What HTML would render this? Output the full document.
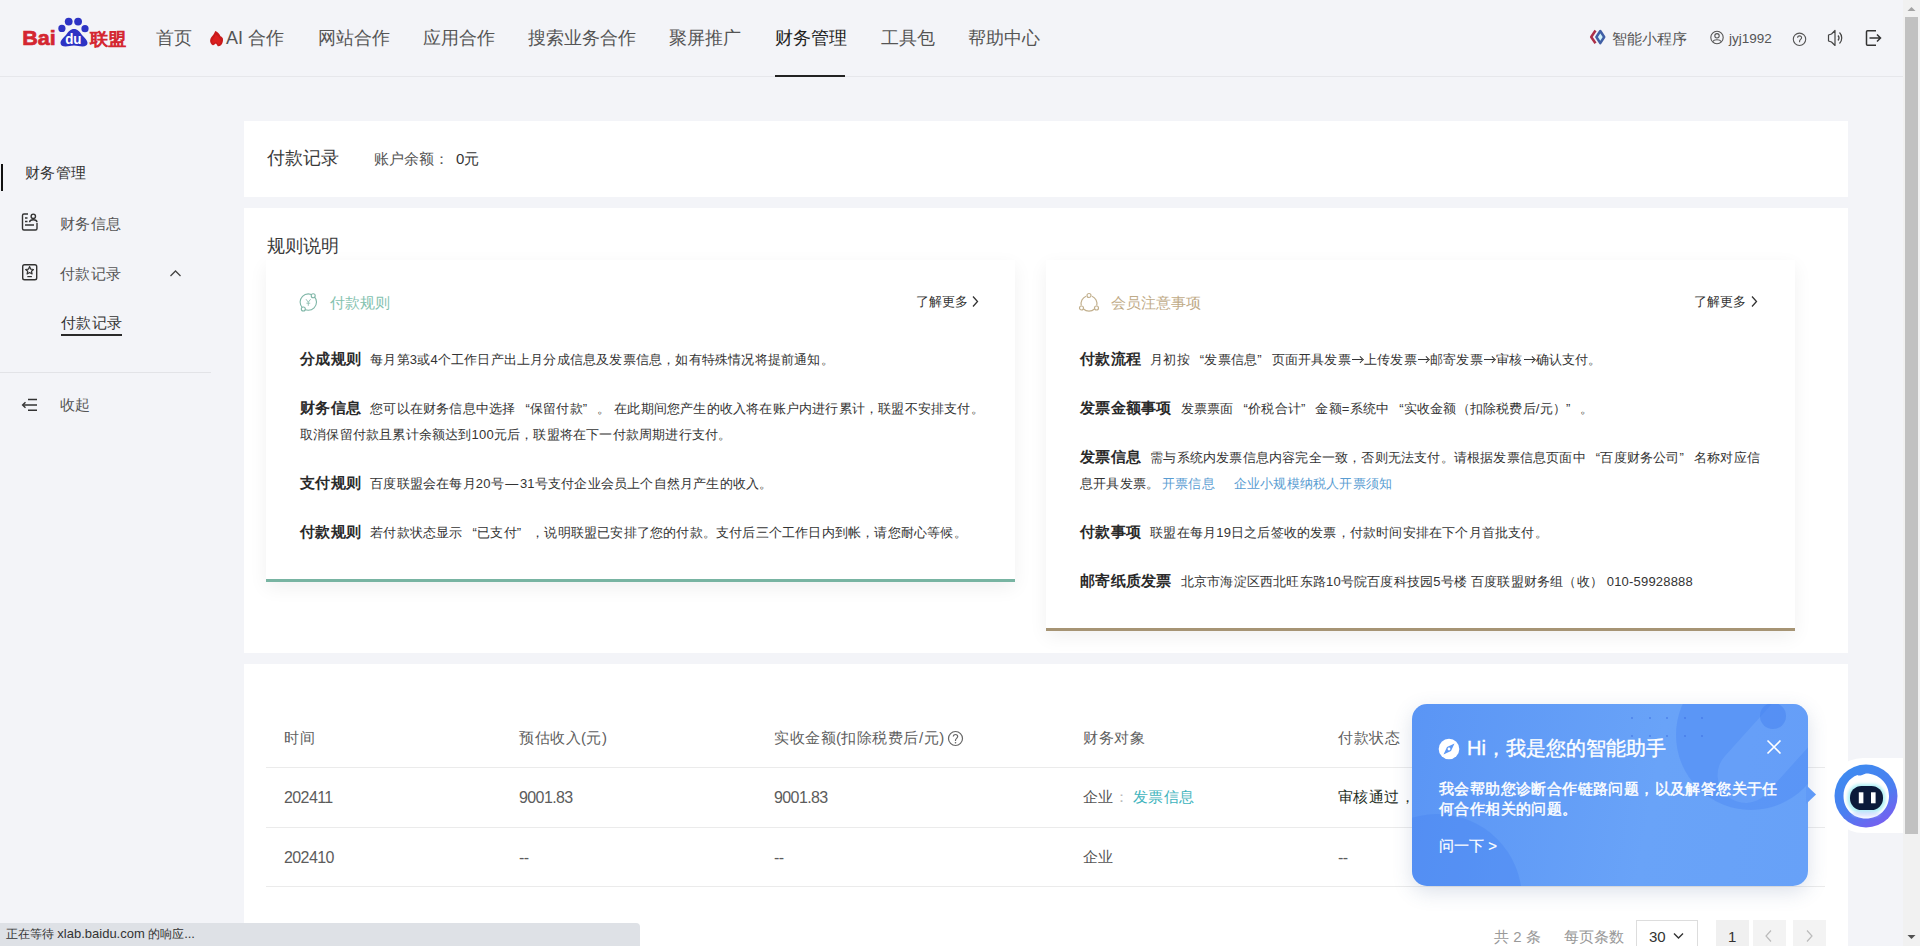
<!DOCTYPE html>
<html><head><meta charset="utf-8">
<style>
*{box-sizing:border-box;margin:0;padding:0}
html,body{width:1920px;height:946px;overflow:hidden}
body{background:#f3f4f8;font-family:"Liberation Sans",sans-serif;color:#555;position:relative}
.a{position:absolute;white-space:nowrap}
.nav{font-size:18px;line-height:24px;top:26px;color:#555}
.side{font-size:15px;letter-spacing:0.4px;line-height:20px;color:#555}
.card{position:absolute;background:#fff}
.sub{position:absolute;background:#fff;box-shadow:0 6px 18px rgba(0,0,0,0.06)}
.p{position:absolute;white-space:nowrap;font-size:13px;letter-spacing:0.2px;line-height:26px;color:#333}
.p b{font-size:15px;letter-spacing:0.3px;color:#2a2a2a;margin-right:9px;font-weight:bold}
.ql{display:inline-block;width:14.5px;text-align:right}
.qr{display:inline-block;width:14.5px;text-align:left}
.ar{display:inline-block;width:13.2px;height:8px;vertical-align:0.5px;position:relative}
.ar:before{content:"";position:absolute;left:1.5px;top:3.5px;width:10px;height:1px;background:#333}
.ar:after{content:"";position:absolute;left:7.5px;top:1.5px;width:3.5px;height:3.5px;border-top:1px solid #333;border-right:1px solid #333;transform:rotate(45deg)}
.th{font-size:15px;letter-spacing:0.5px;line-height:20px;color:#606060}
.td{font-size:16px;letter-spacing:-0.6px;line-height:20px;color:#5c5c5c}
.tc{font-size:15px;letter-spacing:0.4px;line-height:20px;color:#555}
.line{position:absolute;height:1px;background:#ebebeb}
</style></head><body>

<!-- header -->
<div class="a" style="left:0;top:76px;width:1903px;height:1px;background:#e6e7eb"></div>
<svg class="a" style="left:0;top:0" width="140" height="76" viewBox="0 0 140 76">
  <text x="22.3" y="45.3" font-family="Liberation Sans" font-weight="bold" font-size="21" fill="#d42630" stroke="#d42630" stroke-width="0.7" textLength="33.5" lengthAdjust="spacingAndGlyphs">Bai</text>
  <circle cx="68.7" cy="21.6" r="3.9" fill="#2d33c4"/>
  <circle cx="78.1" cy="21.6" r="3.9" fill="#2d33c4"/>
  <circle cx="61.9" cy="28.4" r="3.6" fill="#2d33c4"/>
  <circle cx="85" cy="28.7" r="3.6" fill="#2d33c4"/>
  <path d="M74 29 C70.5 29 68.5 31.5 66 35 C63.5 38 60.5 40 60.5 43 C60.5 45.5 62.5 46.4 65.5 46.4 C68.5 46.4 71 45.6 74 45.6 C77 45.6 79.5 46.4 82.5 46.4 C85.5 46.4 87.5 45.3 87.5 43 C87.5 40 84.5 38 82 35 C79.5 31.5 77.5 29 74 29Z" fill="#2d33c4"/>
  <text x="65.2" y="43.6" font-family="Liberation Sans" font-weight="bold" font-size="14" fill="#fff" textLength="16.3" lengthAdjust="spacingAndGlyphs">du</text>
  <text x="89.8" y="44.6" font-size="17" fill="#d42630" stroke="#d42630" stroke-width="0.9" textLength="36.5" lengthAdjust="spacingAndGlyphs">联盟</text>
</svg>
<div class="a nav" style="left:156px">首页</div>
<svg class="a" style="left:204px;top:26px" width="24" height="24" viewBox="0 0 24 24"><path d="M11.2 5 C13.5 5.5 15.5 8 16.5 10.2 C17.5 10.5 18.6 11.5 18.9 12.5 C19.3 14.5 18.8 17.5 17 19.2 C16 20.1 14.8 20.5 13.8 20.3 C13.2 19.5 12.6 18.2 11.8 17.6 C11 18.3 9.8 19.4 8.8 19.2 C7.2 18.5 6 16.5 6.1 14.5 C6.3 12 8 10.5 9.3 8.8 C10.2 7.6 10.6 6.2 11.2 5Z" fill="#c81a1c"/><path d="M11.5 8.5 C13.5 9.5 15.5 11.5 16.5 14 C17 16 16 18 14.5 19 C14 17.5 13 16.5 12 16 C10.5 16.5 9.5 17.5 9 18 C8 16.5 8 14.5 9 13 C10 11.5 11 10.5 11.5 8.5Z" fill="#e42222" opacity="0.7"/></svg>
<div class="a nav" style="left:226px">AI 合作</div>
<div class="a nav" style="left:318px">网站合作</div>
<div class="a nav" style="left:423px">应用合作</div>
<div class="a nav" style="left:528px">搜索业务合作</div>
<div class="a nav" style="left:669px">聚屏推广</div>
<div class="a nav" style="left:775px;color:#222">财务管理</div>
<div class="a" style="left:775px;top:75px;width:70px;height:2px;background:#222"></div>
<div class="a nav" style="left:881px">工具包</div>
<div class="a nav" style="left:968px">帮助中心</div>

<!-- header right -->
<svg class="a" style="left:1589px;top:29px" width="18" height="16" viewBox="0 0 18 16">
  <path d="M6.5 1.5 L2.2 8 L6.5 14.3" fill="none" stroke="#ad3049" stroke-width="2.5" stroke-linejoin="round"/>
  <path d="M11.3 2 L15.2 8 L11.3 14.2 L7.4 8Z" fill="#cff2fb" stroke="#405fa5" stroke-width="2.5" stroke-linejoin="round"/>
</svg>
<div class="a" style="left:1612px;top:29px;font-size:15px;line-height:20px;color:#555">智能小程序</div>
<svg class="a" style="left:1710px;top:30px" width="15" height="15" viewBox="0 0 15 15">
  <circle cx="7" cy="7.5" r="6.2" fill="none" stroke="#555" stroke-width="1.1"/>
  <circle cx="7" cy="5.8" r="2.2" fill="none" stroke="#555" stroke-width="1.1"/>
  <path d="M3 11.5 C4 9.2 10 9.2 11 11.5" fill="none" stroke="#555" stroke-width="1.1"/>
</svg>
<div class="a" style="left:1729px;top:29px;font-size:13.5px;line-height:20px;color:#555">jyj1992</div>
<svg class="a" style="left:1792px;top:32px" width="15" height="15" viewBox="0 0 15 15">
  <circle cx="7.5" cy="7.3" r="6.2" fill="none" stroke="#555" stroke-width="1.1"/>
  <path d="M5.6 5.8 C5.6 3.2 9.6 3.2 9.6 5.8 C9.6 7.3 7.6 7.4 7.6 9 L7.6 10.3" fill="none" stroke="#555" stroke-width="1.1"/>
</svg>
<svg class="a" style="left:1827px;top:29px" width="18" height="18" viewBox="0 0 18 18">
  <path d="M1.5 6 L4.5 5 L8 1.5 L8 16.5 L4.5 13 L1.5 12Z" fill="none" stroke="#444" stroke-width="1.2" stroke-linejoin="round"/>
  <path d="M11 6.5 C12.3 8 12.3 10 11 11.5" fill="none" stroke="#444" stroke-width="1.2"/>
  <path d="M12.5 3.5 C15.5 6.5 15.5 11.5 12.5 14.5" fill="none" stroke="#444" stroke-width="1.2"/>
</svg>
<svg class="a" style="left:1865px;top:29px" width="18" height="18" viewBox="0 0 18 18">
  <path d="M11 1.8 L2.5 1.8 Q1.5 1.8 1.5 2.8 L1.5 15.2 Q1.5 16.2 2.5 16.2 L11 16.2" fill="none" stroke="#333" stroke-width="1.5"/>
  <path d="M4.5 9 L15.5 9 M12 5.5 L15.5 9 L12 12.5" fill="none" stroke="#333" stroke-width="1.5"/>
</svg>

<!-- sidebar -->
<div class="a" style="left:1px;top:164px;width:2px;height:27px;background:#111"></div>
<div class="a side" style="left:25px;top:163px;color:#333">财务管理</div>
<svg class="a" style="left:20px;top:211px" width="20" height="22" viewBox="0 0 20 22">
  <path d="M8 3 L4 3 Q2.5 3 2.5 4.5 L2.5 17.5 Q2.5 19 4 19 L15.5 19 Q17 19 17 17.5 L17 12" fill="none" stroke="#333" stroke-width="1.4"/>
  <circle cx="13.3" cy="5.3" r="2.2" fill="none" stroke="#333" stroke-width="1.4"/>
  <path d="M9.5 11.2 C9.8 8 16.8 8 17 11.2" fill="none" stroke="#333" stroke-width="1.4"/>
  <path d="M5 7 L7.5 7 M5 10.5 L7.5 10.5 M5 14 L14 14" stroke="#333" stroke-width="1.4"/>
</svg>
<div class="a side" style="left:60px;top:214px">财务信息</div>
<svg class="a" style="left:20px;top:262px" width="20" height="20" viewBox="0 0 20 20">
  <rect x="2.7" y="2.7" width="14" height="15" rx="1.8" fill="none" stroke="#333" stroke-width="1.4"/>
  <path d="M9.6 4.6 L10.8 7.2 L13.5 7.5 L11.5 9.3 L12.1 12 L9.6 10.6 L7.1 12 L7.7 9.3 L5.7 7.5 L8.4 7.2Z" fill="none" stroke="#333" stroke-width="1.2" stroke-linejoin="round"/>
  <path d="M7.3 14.6 L11.9 14.6" stroke="#333" stroke-width="1.2"/>
</svg>
<div class="a side" style="left:60px;top:264px">付款记录</div>
<svg class="a" style="left:169px;top:268.5px" width="13" height="9" viewBox="0 0 13 9"><path d="M1.5 7 L6.5 2 L11.5 7" fill="none" stroke="#444" stroke-width="1.3"/></svg>
<div class="a side" style="left:61px;top:313px;color:#333">付款记录</div>
<div class="a" style="left:61px;top:334px;width:61px;height:2px;background:#2a2a2a"></div>
<div class="a" style="left:0;top:372px;width:211px;height:1px;background:#e2e3e7"></div>
<svg class="a" style="left:20px;top:395px" width="20" height="20" viewBox="0 0 20 20">
  <path d="M8 4.5 L17 4.5 M3.5 10 L17 10 M8 15.3 L17 15.3" fill="none" stroke="#333" stroke-width="1.4"/>
  <path d="M5.5 7.2 L2.6 10 L5.5 12.8" fill="none" stroke="#333" stroke-width="1.4"/>
</svg>
<div class="a side" style="left:60px;top:395px">收起</div>

<!-- card 1 -->
<div class="card" style="left:244px;top:121px;width:1604px;height:76px"></div>
<div class="a" style="left:267px;top:146px;font-size:18px;line-height:24px;color:#3a3a3a">付款记录</div>
<div class="a" style="left:374px;top:149px;font-size:15px;line-height:20px;color:#555">账户余额：</div>
<div class="a" style="left:456px;top:149px;font-size:15px;line-height:20px;color:#333">0元</div>

<!-- card 2 -->
<div class="card" style="left:244px;top:208px;width:1604px;height:445px"></div>
<div class="a" style="left:267px;top:234px;font-size:18px;line-height:24px;color:#3a3a3a">规则说明</div>


<!-- left sub card -->
<div class="sub" style="left:266px;top:260px;width:749px;height:322px;border-bottom:3px solid #78b4a2"></div>
<svg class="a" style="left:298px;top:292px" width="20" height="20" viewBox="0 0 20 20">
  <circle cx="10.3" cy="10.1" r="8.2" fill="none" stroke="#7fb6a7" stroke-width="1.1"/>
  <circle cx="15.2" cy="3.8" r="2" fill="#fff" stroke="#7fb6a7" stroke-width="1.1"/>
  <circle cx="5.3" cy="17" r="2" fill="#fff" stroke="#7fb6a7" stroke-width="1.1"/>
  <path d="M8 7.2 L10.3 10.2 L12.6 7.2 M10.3 10.2 L10.3 13.8 M8.4 11.2 L12.2 11.2" fill="none" stroke="#8dbdb0" stroke-width="0.9"/>
</svg>
<div class="a" style="left:330px;top:293px;font-size:15px;line-height:20px;color:#84c2af">付款规则</div>
<div class="a" style="left:916px;top:293px;font-size:13px;line-height:18px;color:#333">了解更多</div>
<svg class="a" style="left:971px;top:295px" width="9" height="13" viewBox="0 0 9 13"><path d="M2 1.5 L6.5 6.5 L2 11.5" fill="none" stroke="#333" stroke-width="1.3"/></svg>

<div class="p" style="left:300px;top:346px"><b>分成规则</b>每月第3或4个工作日产出上月分成信息及发票信息，如有特殊情况将提前通知。</div>
<div class="p" style="left:300px;top:395px"><b>财务信息</b>您可以在财务信息中选择<span class="ql">“</span>保留付款<span class="qr">”</span>。 在此期间您产生的收入将在账户内进行累计，联盟不安排支付。<br>取消保留付款且累计余额达到100元后，联盟将在下一付款周期进行支付。</div>
<div class="p" style="left:300px;top:470px"><b>支付规则</b>百度联盟会在每月20号<span style="display:inline-block;width:16px;text-align:center">—</span>31号支付企业会员上个自然月产生的收入。</div>
<div class="p" style="left:300px;top:519px"><b>付款规则</b>若付款状态显示<span class="ql">“</span>已支付<span class="qr">”</span>，说明联盟已安排了您的付款。支付后三个工作日内到帐，请您耐心等候。</div>

<!-- right sub card -->
<div class="sub" style="left:1046px;top:260px;width:749px;height:371px;border-bottom:3px solid #a69474"></div>
<svg class="a" style="left:1078px;top:292px" width="22" height="20" viewBox="0 0 22 20">
  <path d="M8 4.2 A8 8 0 0 0 3.3 13.5 M14 4.2 A8 8 0 0 1 18.7 13.5 M5.5 17 A8 8 0 0 0 16.5 17" fill="none" stroke="#c2b08e" stroke-width="1.2"/>
  <circle cx="11" cy="3.5" r="2" fill="#fff" stroke="#c2b08e" stroke-width="1.2"/>
  <circle cx="3.5" cy="16" r="2" fill="#fff" stroke="#c2b08e" stroke-width="1.2"/>
  <circle cx="18.5" cy="16" r="2" fill="#fff" stroke="#c2b08e" stroke-width="1.2"/>
</svg>
<div class="a" style="left:1111px;top:293px;font-size:15px;line-height:20px;color:#bfab88">会员注意事项</div>
<div class="a" style="left:1694px;top:293px;font-size:13px;line-height:18px;color:#333">了解更多</div>
<svg class="a" style="left:1750px;top:295px" width="9" height="13" viewBox="0 0 9 13"><path d="M2 1.5 L6.5 6.5 L2 11.5" fill="none" stroke="#333" stroke-width="1.3"/></svg>

<div class="p" style="left:1080px;top:346px"><b>付款流程</b>月初按<span class="ql">“</span>发票信息<span class="qr">”</span>页面开具发票<span class="ar"></span>上传发票<span class="ar"></span>邮寄发票<span class="ar"></span>审核<span class="ar"></span>确认支付。</div>
<div class="p" style="left:1080px;top:395px"><b>发票金额事项</b>发票票面<span class="ql">“</span>价税合计<span class="qr">”</span>金额=系统中<span class="ql">“</span>实收金额（扣除税费后/元）<span class="qr">”</span>。</div>
<div class="p" style="left:1080px;top:444px"><b>发票信息</b>需与系统内发票信息内容完全一致，否则无法支付。请根据发票信息页面中<span class="ql">“</span>百度财务公司<span class="qr">”</span>名称对应信<br>息开具发票。 <span style="color:#5a9dd2;margin-left:-1px">开票信息</span><span style="color:#5a9dd2;margin-left:19px">企业小规模纳税人开票须知</span></div>
<div class="p" style="left:1080px;top:519px"><b>付款事项</b>联盟在每月19日之后签收的发票，付款时间安排在下个月首批支付。</div>
<div class="p" style="left:1080px;top:568px"><b>邮寄纸质发票</b>北京市海淀区西北旺东路10号院百度科技园5号楼 百度联盟财务组（收） 010-59928888</div>

<!-- card 3 table -->
<div class="card" style="left:244px;top:664px;width:1604px;height:282px"></div>
<div class="a th" style="left:284px;top:728px">时间</div>
<div class="a th" style="left:519px;top:728px">预估收入(元)</div>
<div class="a th" style="left:774px;top:728px">实收金额(扣除税费后/元)</div>
<svg class="a" style="left:947px;top:729.5px" width="17" height="17" viewBox="0 0 17 17">
  <circle cx="8.5" cy="8.5" r="7" fill="none" stroke="#666" stroke-width="1.2"/>
  <path d="M6.3 6.6 C6.3 3.8 10.7 3.8 10.7 6.6 C10.7 8.3 8.5 8.4 8.5 10.2 L8.5 11" fill="none" stroke="#666" stroke-width="1.2"/>
  <circle cx="8.5" cy="12.8" r="0.8" fill="#666"/>
</svg>
<div class="a th" style="left:1083px;top:728px">财务对象</div>
<div class="a th" style="left:1338px;top:728px">付款状态</div>
<div class="line" style="left:266px;top:767px;width:1559px"></div>
<div class="a td" style="left:284px;top:787.5px">202411</div>
<div class="a td" style="left:519px;top:787.5px">9001.83</div>
<div class="a td" style="left:774px;top:787.5px">9001.83</div>
<div class="a tc" style="left:1083px;top:787px">企业<span style="color:#bbb">：</span></div>
<div class="a tc" style="left:1133px;top:787px;color:#3fb4bd">发票信息</div>
<div class="a tc" style="left:1338px;top:787px;color:#1e2e1e">审核通过，</div>
<div class="line" style="left:266px;top:827px;width:1559px"></div>
<div class="a td" style="left:284px;top:847.5px">202410</div>
<div class="a td" style="left:519px;top:847.5px">--</div>
<div class="a td" style="left:774px;top:847.5px">--</div>
<div class="a tc" style="left:1083px;top:847px">企业</div>
<div class="a td" style="left:1338px;top:847.5px">--</div>
<div class="line" style="left:266px;top:886px;width:1559px"></div>

<!-- pagination -->
<div class="a" style="left:1494px;top:927px;font-size:15px;line-height:20px;color:#999">共 2 条</div>
<div class="a" style="left:1564px;top:927px;font-size:15px;line-height:20px;color:#999">每页条数</div>
<div class="a" style="left:1636px;top:920px;width:62px;height:40px;border:1px solid #ddd;background:#fff"></div>
<div class="a" style="left:1649px;top:927px;font-size:15px;line-height:20px;color:#333">30</div>
<svg class="a" style="left:1673px;top:932px" width="11" height="8" viewBox="0 0 11 8"><path d="M1 1.5 L5.5 6 L10 1.5" fill="none" stroke="#333" stroke-width="1.4"/></svg>
<div class="a" style="left:1716px;top:920px;width:33px;height:40px;background:#f0f0f0"></div>
<div class="a" style="left:1728px;top:927px;font-size:15px;line-height:20px;color:#333">1</div>
<div class="a" style="left:1753px;top:920px;width:33px;height:40px;background:#f3f3f3"></div>
<svg class="a" style="left:1764px;top:929px" width="9" height="14" viewBox="0 0 9 14"><path d="M7 1.5 L2 7 L7 12.5" fill="none" stroke="#bbb" stroke-width="1.2"/></svg>
<div class="a" style="left:1793px;top:920px;width:33px;height:40px;background:#f3f3f3"></div>
<svg class="a" style="left:1805px;top:929px" width="9" height="14" viewBox="0 0 9 14"><path d="M2 1.5 L7 7 L2 12.5" fill="none" stroke="#bbb" stroke-width="1.2"/></svg>

<!-- status bar -->
<div class="a" style="left:0;top:923px;width:640px;height:23px;background:#dee1e6;border-top-right-radius:4px"></div>
<div class="a" style="left:6px;top:926px;font-size:12px;line-height:16px;color:#333">正在等待 <span style="font-size:13px">xlab.baidu.com</span> 的响应<span style="font-size:13px">...</span></div>

<!-- popup -->
<div class="a" style="left:1412px;top:704px;width:396px;height:182px;border-radius:15px;background:linear-gradient(100deg,#5a95f5 0%,#69a3f8 60%,#67a1f8 100%);box-shadow:0 6px 20px rgba(60,90,140,0.18);overflow:hidden">
  <div style="position:absolute;left:-60px;top:110px;width:170px;height:170px;border-radius:50%;background:rgba(70,130,240,0.35)"></div>
  <div style="position:absolute;left:264px;top:-44px;width:150px;height:150px;border-radius:50%;background:rgba(75,135,243,0.45)"></div>
  <div style="position:absolute;left:290px;top:8px;width:150px;height:56px;border-radius:28px;background:rgba(140,190,255,0.22);transform:rotate(-48deg)"></div>
  <div style="position:absolute;left:348px;top:-1px;width:26px;height:26px;border-radius:50%;background:rgba(70,130,240,0.5)"></div>
  <svg style="position:absolute;left:215px;top:8px" width="100" height="40" viewBox="0 0 100 40"><g fill="rgba(60,110,225,0.55)">
   <circle cx="5" cy="6" r="1.1"/><circle cx="23" cy="6" r="1.1"/><circle cx="40" cy="6" r="1.1"/><circle cx="58" cy="6" r="1.1"/><circle cx="75" cy="6" r="1.1"/>
   <circle cx="5" cy="24" r="1.1"/><circle cx="23" cy="24" r="1.1"/><circle cx="40" cy="24" r="1.1"/><circle cx="58" cy="24" r="1.1"/><circle cx="75" cy="24" r="1.1"/>
  </g></svg>
</div>
<svg class="a" style="left:1806px;top:785px" width="11" height="19" viewBox="0 0 11 19"><path d="M0 0 L10 9.5 L0 19Z" fill="#609af7"/></svg>
<svg class="a" style="left:1438px;top:738px" width="22" height="22" viewBox="0 0 22 22">
  <circle cx="11" cy="11" r="10.3" fill="#fff"/>
  <path d="M16.5 5.5 L13 13 L5.5 16.5 L9 9Z" fill="#5e99f6"/>
  <circle cx="11" cy="11" r="1.4" fill="#fff"/>
</svg>
<div class="a" style="left:1467px;top:735px;font-size:20px;line-height:26px;color:#fff;-webkit-text-stroke:0.35px #fff">Hi，我是您的智能助手</div>
<svg class="a" style="left:1766px;top:739px" width="16" height="16" viewBox="0 0 16 16"><path d="M1.5 1.5 L14.5 14.5 M14.5 1.5 L1.5 14.5" stroke="#fff" stroke-width="1.6"/></svg>
<div class="a" style="left:1439px;top:779px;font-size:15px;letter-spacing:0.4px;line-height:20px;color:#fff;-webkit-text-stroke:0.45px #fff">我会帮助您诊断合作链路问题，以及解答您关于任<br>何合作相关的问题。</div>
<div class="a" style="left:1439px;top:836px;font-size:15px;line-height:20px;color:#fff;-webkit-text-stroke:0.2px #fff">问一下 &gt;</div>

<!-- robot -->
<div class="a" style="left:1829px;top:758px;width:74px;height:75px;background:#fff;border-radius:34px 0 0 34px"></div>
<svg class="a" style="left:1834px;top:764px" width="64" height="64" viewBox="0 0 64 64">
  <defs>
    <linearGradient id="rg" x1="0.2" y1="0" x2="0.8" y2="1"><stop offset="0" stop-color="#3d8cf0"/><stop offset="0.55" stop-color="#4a7ff0"/><stop offset="1" stop-color="#7c5bf0"/></linearGradient>
    <filter id="gl" x="-30%" y="-30%" width="160%" height="160%"><feGaussianBlur stdDeviation="1.6"/></filter>
  </defs>
  <circle cx="32" cy="32" r="31.5" fill="url(#rg)"/>
  <path d="M32 9.5 C44.5 9.5 55 19 55 32 C55 45 45 54.5 32 54.5 C19 54.5 9.5 45 9.5 32 C9.5 22 15 14 23.5 11 C25 12.5 28 11 32 9.5Z" fill="#fff"/>
  <rect x="13.5" y="20" width="38" height="29" rx="13" fill="#7ee6ef" opacity="0.6" filter="url(#gl)"/>
  <ellipse cx="32" cy="50" rx="14" ry="3" fill="#c9d6ff" opacity="0.6" filter="url(#gl)"/>
  <rect x="16" y="22" width="33" height="24" rx="11.5" fill="#0c1a3a"/>
  <rect x="24.8" y="28.3" width="4.6" height="11" fill="#fff"/>
  <rect x="37" y="28.3" width="4.6" height="11" fill="#fff"/>
</svg>

<!-- scrollbar -->
<div class="a" style="left:1903px;top:0;width:17px;height:946px;background:#f1f1f1"></div>
<div class="a" style="left:1905px;top:17px;width:13px;height:817px;background:#c1c1c1"></div>
<svg class="a" style="left:1903px;top:0" width="17" height="17" viewBox="0 0 17 17"><path d="M4.5 11 L8.5 7 L12.5 11Z" fill="#a3a3a3"/></svg>
<svg class="a" style="left:1903px;top:929px" width="17" height="17" viewBox="0 0 17 17"><path d="M4.5 6 L8.5 10 L12.5 6Z" fill="#505050"/></svg>

</body></html>
